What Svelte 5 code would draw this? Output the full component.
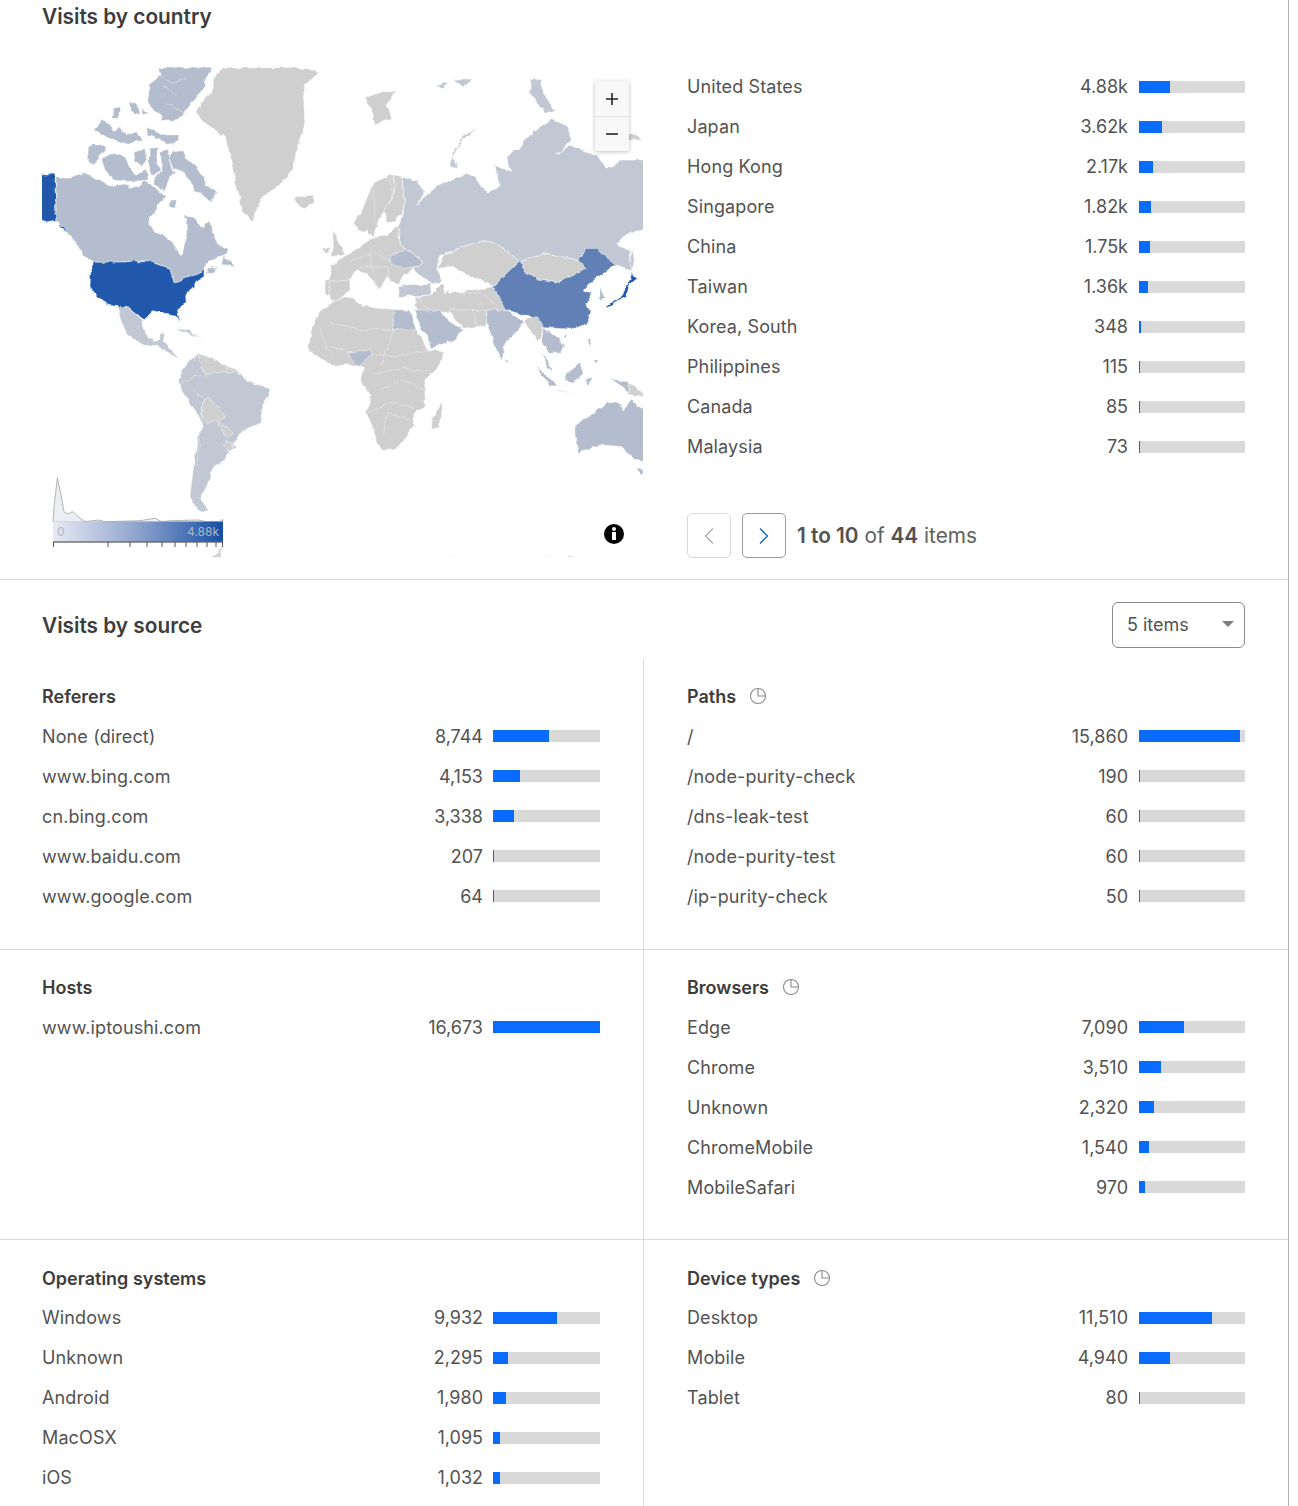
<script lang="ts">
	type Row = { label: string; value: string };

	const TOTAL = 16673;
	const num = (v: string) => (v.endsWith('k') ? parseFloat(v) * 1000 : parseInt(v.replace(',', ''), 10));
	const pct = (v: string) => Math.max((num(v) / TOTAL) * 100, 1.2);

	const countries: Row[] = [
		{ label: 'United States', value: '4.88k' },
		{ label: 'Japan', value: '3.62k' },
		{ label: 'Hong Kong', value: '2.17k' },
		{ label: 'Singapore', value: '1.82k' },
		{ label: 'China', value: '1.75k' },
		{ label: 'Taiwan', value: '1.36k' },
		{ label: 'Korea, South', value: '348' },
		{ label: 'Philippines', value: '115' },
		{ label: 'Canada', value: '85' },
		{ label: 'Malaysia', value: '73' }
	];

	const panels: { title: string; pie?: boolean; rows: Row[] }[] = [
		{
			title: 'Referers',
			rows: [
				{ label: 'None (direct)', value: '8,744' },
				{ label: 'www.bing.com', value: '4,153' },
				{ label: 'cn.bing.com', value: '3,338' },
				{ label: 'www.baidu.com', value: '207' },
				{ label: 'www.google.com', value: '64' }
			]
		},
		{
			title: 'Paths',
			pie: true,
			rows: [
				{ label: '/', value: '15,860' },
				{ label: '/node-purity-check', value: '190' },
				{ label: '/dns-leak-test', value: '60' },
				{ label: '/node-purity-test', value: '60' },
				{ label: '/ip-purity-check', value: '50' }
			]
		},
		{ title: 'Hosts', rows: [{ label: 'www.iptoushi.com', value: '16,673' }] },
		{
			title: 'Browsers',
			pie: true,
			rows: [
				{ label: 'Edge', value: '7,090' },
				{ label: 'Chrome', value: '3,510' },
				{ label: 'Unknown', value: '2,320' },
				{ label: 'ChromeMobile', value: '1,540' },
				{ label: 'MobileSafari', value: '970' }
			]
		},
		{
			title: 'Operating systems',
			rows: [
				{ label: 'Windows', value: '9,932' },
				{ label: 'Unknown', value: '2,295' },
				{ label: 'Android', value: '1,980' },
				{ label: 'MacOSX', value: '1,095' },
				{ label: 'iOS', value: '1,032' }
			]
		},
		{
			title: 'Device types',
			pie: true,
			rows: [
				{ label: 'Desktop', value: '11,510' },
				{ label: 'Mobile', value: '4,940' },
				{ label: 'Tablet', value: '80' }
			]
		}
	];

	// map colours
	const GRAY = '#cfcfcf';
	const PALE = '#c1c7d3';
	const MID = '#b3bdcd';
	const CN = '#6080b6';
	const US = '#2058ab';

	// land shapes, traced per area in a 3x grid: tile origin is given on each group
	const tiles = [
		{
			x: 30,
			y: 60,
			shapes: [
				[US, '10,340 75,343 78,480 50,488 10,475'],
				[US, '85,490 110,495 125,515 145,545 130,528 100,510'],
				[MID, '78,350 110,358 125,350 160,340 180,345 215,362 240,378 285,372 300,385 330,375 345,360 370,380 405,405 400,420 380,440 362,470 358,495 370,515 400,525 432,550 440,575 455,587 470,530 468,480 460,460 500,480 515,505 540,480 545,510 560,545 595,570 590,585 560,595 530,610 525,622 510,640 470,655 432,668 420,625 360,605 190,607 165,590 130,540 90,490 78,480'],
				[US, '190,607 360,605 420,625 432,668 470,655 510,640 525,622 525,650 500,665 478,695 470,710 472,725 440,750 447,788 434,765 370,752 340,778 300,745 230,735 195,700 180,680 182,640'],
				[MID, '385,25 440,22 550,22 535,45 520,65 525,80 495,115 470,150 450,175 430,180 395,185 400,165 372,150 350,115 358,90 355,75 375,60 390,45'],
				[MID, '350,205 375,215 410,225 445,225 450,245 410,250 375,235 352,225'],
				[MID, '297,125 320,135 335,160 315,160 300,145'],
				[MID, '338,140 355,165 340,165'],
				[MID, '250,145 270,140 265,175 245,175'],
				[MID, '195,210 215,180 235,190 250,215 270,200 290,225 320,215 340,240 300,250 270,245 230,232'],
				[MID, '415,290 430,275 460,272 470,295 495,315 510,340 525,350 530,375 560,395 545,420 545,432 515,400 495,395 475,350 455,330 430,330 420,310'],
				[MID, '175,265 190,252 230,262 205,290 190,318 172,305'],
				[MID, '215,300 240,278 285,290 300,320 318,345 350,330 355,360 300,365 250,360 225,330'],
				[MID, '315,280 345,265 350,300 335,320 315,300'],
				[MID, '358,265 385,262 380,310 395,330 365,345 355,310'],
				[MID, '395,275 412,268 420,320 440,340 420,345 405,395 372,375 378,345 398,335'],
				[MID, '420,420 440,420 435,445 420,440'],
				[MID, '580,590 600,600 615,622 590,615 575,610'],
				[MID, '535,625 565,618 545,640 530,640'],
				[GRAY, '580,25 800,22 860,30 865,40 825,75 820,100 825,190 800,270 790,330 740,380 690,420 670,485 640,460 620,380 600,290 590,235 520,185 497,155 540,100 560,40'],
				[GRAY, '795,410 850,405 850,425 820,443 800,430'],
				[GRAY, '908,510 925,540 945,585 905,590 910,560'],
				[GRAY, '880,565 900,560 895,580 878,578'],
				[GRAY, '925,640 960,610 960,665 930,655'],
				[GRAY, '885,660 930,655 960,670 905,710 885,700'],
				[GRAY, '860,780 900,740 960,710 960,780']
			]
		},
		{
			x: 330,
			y: 60,
			shapes: [
				[PALE, '215,350 260,365 285,395 260,435 300,395 340,370 405,340 440,355 470,400 495,385 510,375 490,315 545,335 530,290 565,265 590,230 650,190 670,175 720,205 725,240 680,285 720,255 800,285 830,325 880,300 965,300 965,495 880,530 862,550 900,575 905,630 860,615 850,625 800,565 770,565 745,600 640,578 570,605 500,550 460,542 400,560 330,585 320,625 340,665 300,672 275,650 250,625 280,605 230,570 210,550 205,500 225,440'],
				[PALE, '455,195 400,225 370,280 360,320 385,325 370,290 400,235'],
				[PALE, '600,60 630,55 640,100 675,150 645,160 600,100'],
				[PALE, '320,70 350,70 340,85'],
				[PALE, '370,60 430,60 400,80'],
				[GRAY, '105,110 150,95 200,95 170,130 185,175 135,195 125,150'],
				[GRAY, '70,490 100,440 130,370 175,345 195,345 190,410 165,450 145,480 130,530 110,510 95,520'],
				[GRAY, '195,345 215,350 225,440 200,480 170,490 165,450 190,410'],
				[GRAY, '60,580 100,555 130,530 170,525 205,500 210,550 230,570 280,605 250,630 220,650 205,675 170,650 150,690 110,640 80,630 60,660 0,680 0,620'],
				[MID, '180,590 230,570 280,605 250,625 205,620 180,610'],
				[PALE, '205,680 300,672 305,705 210,710'],
				[GRAY, '0,665 60,660 60,690 20,720 0,720'],
				[GRAY, '340,585 400,560 460,542 500,550 570,605 545,625 490,680 450,660 400,640 370,620 322,625'],
				[GRAY, '570,605 640,578 745,600 770,625 745,640 680,668 625,660 590,640'],
				[GRAY, '255,710 305,705 340,665 360,700 490,680 530,750 260,760'],
				['#fff', '325,628 350,625 365,680 345,700 335,665'],
				[CN, '490,680 545,625 570,605 590,640 625,660 680,668 745,640 770,625 745,600 770,565 800,565 855,615 820,640 790,662 760,690 785,700 770,730 780,750 775,790 735,805 640,800 600,770 530,750'],
				[MID, '810,680 825,715 810,722'],
				[PALE, '905,560 915,610 902,630'],
				[US, '905,640 920,655 900,670 890,710 860,725 830,745 830,735 870,715 890,680'],
				[GRAY, '895,220 920,225 940,240 895,240']
			]
		},
		{
			x: 30,
			y: 310,
			shapes: [
				[PALE, '232,0 262,50 255,40'],
				[PALE, '262,-12 300,-5 335,28 340,55 350,80 375,95 385,90 395,70 405,68 400,95 425,120 450,150 420,130 385,110 365,105 330,100 290,70 272,30'],
				[PALE, '500,130 560,150 630,190 650,210 722,238 700,280 690,340 640,360 610,400 620,410 590,430 585,450 550,470 530,530 510,570 535,600 510,605 480,560 490,470 500,400 515,340 500,310 450,235 445,210 470,160'],
				[GRAY, '500,130 560,150 630,190 580,185 530,195 515,165'],
				[GRAY, '520,270 540,262 585,320 530,340 515,310'],
				[GRAY, '560,330 610,370 590,385'],
				[GRAY, '590,395 615,405 595,425 582,410'],
				[PALE, '430,55 470,60 520,85 465,68'],
				[GRAY, '545,742 565,725 580,705 570,742']
			]
		},
		{
			x: 330,
			y: 310,
			shapes: [
				[GRAY, '-55,50 -40,20 10,-30 50,-40 100,-15 140,-5 235,0 255,50 295,118 345,130 320,175 285,210 285,290 250,310 250,345 210,410 160,425 145,400 110,310 120,260 95,210 100,175 75,165 0,165 -65,120'],
				[MID, '190,0 238,0 258,60 190,60'],
				[MID, '60,125 120,120 125,130 90,170 60,150'],
				[MID, '250,0 330,0 345,25 370,40 400,60 370,90 305,115 285,70'],
				[GRAY, '335,280 340,300 325,350 305,355 305,330'],
				[GRAY, '360,0 470,0 470,45 440,50 400,55 375,30'],
				[MID, '470,0 530,0 580,35 560,65 525,100 515,150 495,110 478,60 470,45'],
				[GRAY, '580,30 620,20 640,50 630,90 620,95 600,60'],
				[MID, '640,50 700,100 695,130 660,130 635,95'],
				[MID, '640,120 668,190 650,175'],
				[MID, '620,168 680,225 660,225 625,185'],
				[MID, '680,238 730,250 690,243'],
				[MID, '705,195 750,160 760,190 730,220 705,210'],
				[MID, '765,210 785,205 775,230'],
				[MID, '770,90 782,85 780,115'],
				[MID, '790,150 805,150 800,160'],
				[MID, '840,205 895,215 895,250 870,225'],
				[GRAY, '895,220 965,265 895,250'],
				[MID, '525,145 535,160 525,160'],
				[US, '702,75 710,78 705,87'],
				[MID, '735,345 790,310 830,275 870,280 880,300 905,270 965,320 965,460 915,450 875,410 820,405 745,425 735,380'],
				[MID, '920,478 965,478 930,495'],
				[GRAY, '355,740 375,740 375,744 355,744'],
				[GRAY, '655,740 670,740 670,744 655,744'],
				[GRAY, '715,740 730,740 730,744 715,744']
			]
		}
	];

	// internal borders and water channels, same per-tile grid
	const borders = [
		{ x: 30, y: 60, pts: ['390,50 430,70 470,55', '400,75 445,110', '410,130 465,160', '430,200 470,190'] },
		{ x: 330, y: 310, pts: ['0,40 60,50 100,60 130,55 190,60 175,110 150,170', '60,125 0,110', '125,130 180,140 250,130 300,120', '130,190 220,175 290,185', '150,240 220,210 280,240', '115,310 170,280 250,290', '160,380 170,310 240,330', '-30,60 -10,120 10,130', '430,0 440,50'] },
		{ x: 330, y: 60, pts: ['60,600 130,580 180,600 205,620', '125,560 125,640', '85,620 170,620 180,680', '380,640 400,700 460,700 500,740', '260,710 300,760', '130,380 135,480', '175,345 190,410'] },
		{ x: 30, y: 310, pts: ['490,240 520,265 515,340 500,470', '445,225 490,200 530,195', '515,165 530,195', '590,185 595,160'] }
	];

	const ticks = [53.5, 108, 130, 147, 162, 175, 186, 197, 207, 216, 222.5];
</script>

<div class="page">
	<section class="country">
		<h2>Visits by country</h2>
		<div class="country-body">
			<div class="map">
				<svg viewBox="42 67 601 490" width="601" height="490" aria-hidden="true">
					<defs>
						<linearGradient id="scale" x1="0" x2="1" y1="0" y2="0">
							<stop offset="0" stop-color="#e7eaf3" />
							<stop offset="0.5" stop-color="#8ea3cc" />
							<stop offset="1" stop-color="#174fa5" />
						</linearGradient>
						<!-- roughens the traced polygons into coastlines -->
						<filter id="coast" filterUnits="userSpaceOnUse" x="30" y="60" width="625" height="505">
							<feTurbulence type="fractalNoise" baseFrequency="0.12" numOctaves="3" seed="4" result="n" />
							<feDisplacementMap in="SourceGraphic" in2="n" scale="5" xChannelSelector="R" yChannelSelector="G" result="d" />
							<feGaussianBlur in="d" stdDeviation="0.35" />
						</filter>
					</defs>
					<g filter="url(#coast)">
						{#each tiles as t}
							<g transform="translate({t.x} {t.y}) scale(0.3333)" stroke="#fff" stroke-width="1.5" stroke-linejoin="round">
								{#each t.shapes as s}
									<polygon fill={s[0]} points={s[1]} />
								{/each}
							</g>
						{/each}
						{#each borders as b}
							<g transform="translate({b.x} {b.y}) scale(0.3333)" stroke="#f2f2f2" stroke-width="1.6" fill="none">
								{#each b.pts as p}
									<polyline points={p} />
								{/each}
							</g>
						{/each}
					</g>
					<path class="curve" d="M53 522 L54 507 L57.300 478 L60.700 493 L64 511.700 L67.300 514 L72.700 511.700 L78.300 516.700 L85 521.700 L98.300 520 L105 521.700 L140 520.700 L155 518.300 L161.700 521.700 L170 520.700 L198.300 520 L206.700 521.700 L220 521.700 L222.700 519.300 L223 522 Z" />
					<rect x="53" y="521.700" width="170" height="20" fill="url(#scale)" />
					<path d="M53 542 H223" stroke="#333" stroke-width="1" />
					{#each ticks as x}
						<path d="M{x} 542 V547" stroke="#555" stroke-width="1" />
					{/each}
					<text class="scale-min" x="57" y="536">0</text>
					<text class="scale-max" x="219" y="536" text-anchor="end">4.88k</text>
					<circle cx="614" cy="534" r="10" fill="#000" />
					<rect x="612" y="532" width="4" height="8" fill="#fff" />
					<circle cx="614" cy="529" r="2" fill="#fff" />
				</svg>
				<div class="zoom">
					<button aria-label="Zoom in">
						<svg width="14" height="14" viewBox="0 0 14 14"><path d="M7 1v12M1 7h12" stroke="#222" stroke-width="1.6" /></svg>
					</button>
					<button aria-label="Zoom out">
						<svg width="14" height="14" viewBox="0 0 14 14"><path d="M1 7h12" stroke="#222" stroke-width="1.6" /></svg>
					</button>
				</div>
			</div>
			<div class="table">
				{#each countries as r}
					<div class="row">
						<span class="label">{r.label}</span>
						<span class="value">{r.value}</span>
						<span class="bar"><i style="width:{pct(r.value)}%"></i></span>
					</div>
				{/each}
				<div class="pager">
					<button class="nav" disabled aria-label="Previous">
						<svg width="12" height="18" viewBox="0 0 12 18"><path d="M10 1.500 2.500 9l7.500 7.500" fill="none" stroke="#a8a8a8" stroke-width="1.200" /></svg>
					</button>
					<button class="nav next" aria-label="Next">
						<svg width="12" height="18" viewBox="0 0 12 18"><path d="M2 1.500 9.500 9 2 16.500" fill="none" stroke="#0f62c4" stroke-width="1.300" /></svg>
					</button>
					<span class="count"><b>1 to 10</b> of <b>44</b> items</span>
				</div>
			</div>
		</div>
	</section>

	<section class="source">
		<header>
			<h2>Visits by source</h2>
			<div class="select">5 items<span class="caret"></span></div>
		</header>
		<div class="panels">
			{#each panels as p}
				<div class="panel">
					<h3>
						{p.title}
						{#if p.pie}
							<svg width="18" height="18" viewBox="0 0 18 18" fill="none" stroke="#8a8a8a" stroke-width="1.100">
								<circle cx="9" cy="9" r="7.500" />
								<path d="M9 1.500V9h7.500" />
							</svg>
						{/if}
					</h3>
					{#each p.rows as r}
						<div class="row">
							<span class="label">{r.label}</span>
							<span class="value">{r.value}</span>
							<span class="bar"><i style="width:{pct(r.value)}%"></i></span>
						</div>
					{/each}
				</div>
			{/each}
		</div>
	</section>
</div>

<style>
	:global(body) {
		background: #fff;
		font-family: Inter, 'Liberation Sans', sans-serif;
		color: #525252;
	}
	.page {
		width: 1288px;
		height: 1506px;
		overflow: hidden;
		border-right: 1px solid #b4b4b4;
		box-sizing: content-box;
	}
	h2 {
		margin: 0;
		padding-top: 1px;
		font-size: 20.800px;
		line-height: 32px;
		font-weight: 600;
		color: #3d3d3d;
	}
	.source h2 {
		padding-top: 2px;
	}
	.country {
		height: 579px;
		padding: 0 43px 0 42px;
		box-sizing: content-box;
		border-bottom: 1px solid #d9d9d9;
	}
	.country-body {
		display: grid;
		grid-template-columns: 601px 1fr;
		column-gap: 44px;
		margin-top: 34px;
		width: 1203px;
	}
	.map {
		position: relative;
		width: 601px;
		height: 490px;
		overflow: hidden;
	}
	.map > svg {
		display: block;
	}
	.curve {
		fill: #eceef4;
		stroke: #999;
		stroke-width: 0.7;
	}
	.scale-min,
	.scale-max {
		font-size: 12px;
		fill: #b0b6c6;
	}
	.zoom {
		position: absolute;
		left: 553px;
		top: 14px;
		width: 34px;
		background: #f8f8f8;
		box-shadow: 0 1px 4px rgba(0, 0, 0, 0.25);
		border-radius: 2px;
	}
	.zoom button {
		display: flex;
		align-items: center;
		justify-content: center;
		width: 34px;
		height: 35px;
		padding: 0;
		border: 0;
		background: transparent;
	}
	.zoom button + button {
		border-top: 1px solid #e2e2e2;
	}
	.row {
		display: grid;
		grid-template-columns: 1fr auto 106px;
		column-gap: 11px;
		align-items: center;
		height: 40px;
		font-size: 18px;
	}
	.label,
	.value {
		white-space: nowrap;
	}
	.label {
		letter-spacing: 0.12px;
	}
	.table .label,
	.table .value,
	.panel:nth-child(n + 5) .label,
	.panel:nth-child(n + 5) .value {
		padding-bottom: 2px;
	}
	.bar {
		display: block;
		height: 12px;
		background: #d9d9d9;
	}
	.bar i {
		display: block;
		height: 100%;
		background: #0a6cff;
	}
	.pager {
		display: flex;
		align-items: center;
		margin-top: 46px;
	}
	.nav {
		display: flex;
		align-items: center;
		justify-content: center;
		width: 44px;
		height: 45px;
		padding: 0;
		margin-right: 11px;
		background: #fff;
		border: 1px solid #d9d9d9;
		border-radius: 5px;
	}
	.nav.next {
		border-color: #9a9a9a;
	}
	.count {
		font-size: 20.800px;
		color: #606060;
	}
	.count b {
		font-weight: 600;
		color: #525252;
	}
	.source header {
		display: flex;
		align-items: center;
		justify-content: space-between;
		height: 46px;
		margin-top: 22px;
		padding: 0 43px 0 42px;
	}
	.select {
		position: relative;
		width: 133px;
		height: 46px;
		box-sizing: border-box;
		padding-left: 14px;
		line-height: 44px;
		font-size: 18px;
		border: 1px solid #8a8a8a;
		border-radius: 6px;
	}
	.caret {
		position: absolute;
		right: 10px;
		top: 18px;
		border-left: 6px solid transparent;
		border-right: 6px solid transparent;
		border-top: 6px solid #7d7d7d;
	}
	.panels {
		display: grid;
		grid-template-columns: 644px 644px;
		grid-auto-rows: 290.500px;
		margin-top: 11px;
	}
	.panel {
		box-sizing: border-box;
		padding: 17px 45px 0 42px;
		border-bottom: 1px solid #d9d9d9;
	}
	.panel:nth-child(odd) {
		border-right: 1px solid #d9d9d9;
		padding-right: 43px;
	}
	.panel:nth-child(even) {
		padding-left: 43px;
		padding-right: 43px;
	}
	.panel:nth-child(n + 3) {
		padding-top: 17.600px;
	}
	.panel:nth-child(n + 5) {
		padding-top: 18px;
	}
	.panel:nth-child(odd) .row {
		grid-template-columns: 1fr auto 107px;
		column-gap: 10px;
	}
	h3 {
		display: flex;
		align-items: center;
		gap: 13px;
		margin: 0;
		height: 40px;
		font-size: 18px;
		font-weight: 600;
		color: #3d3d3d;
	}
</style>
